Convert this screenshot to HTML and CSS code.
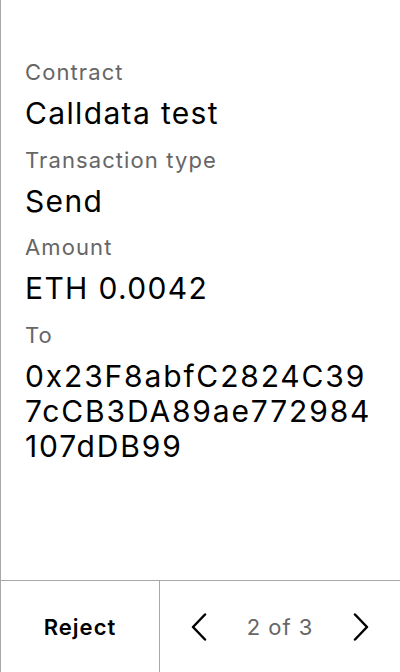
FILE: index.html
```html
<!DOCTYPE html>
<html>
<head>
<meta charset="utf-8">
<link rel="stylesheet" href="styles.css">
</head>
<body>
<div class="screen">
  <main class="details">
    <div class="label">Contract</div>
    <div class="value">Calldata test</div>
    <div class="label">Transaction type</div>
    <div class="value">Send</div>
    <div class="label">Amount</div>
    <div class="value">ETH 0.0042</div>
    <div class="label">To</div>
    <div class="value address">0x23F8abfC2824C397cCB3DA89ae772984107dDB99</div>
  </main>
  <footer class="actions">
    <button class="reject">Reject</button>
    <div class="pager">
      <button class="chev" aria-label="Previous">
        <svg width="24" height="28" viewBox="0 0 24 28"><path d="M18 1.5 L6 14 L18 26.5" fill="none" stroke="#000" stroke-width="2.5" stroke-linecap="round" stroke-linejoin="round"/></svg>
      </button>
      <span class="count">2 of 3</span>
      <button class="chev" aria-label="Next">
        <svg width="24" height="28" viewBox="0 0 24 28"><path d="M6 1.5 L18 14 L6 26.5" fill="none" stroke="#000" stroke-width="2.5" stroke-linecap="round" stroke-linejoin="round"/></svg>
      </button>
    </div>
  </footer>
</div>
</body>
</html>
```

FILE: styles.css
```css
* { box-sizing: border-box; }
html, body { margin: 0; padding: 0; background: #fff; }
body {
  font-family: Inter, "Noto Sans", sans-serif;
  color: #000;
}
.screen {
  width: 400px;
  height: 672px;
  border-left: 1px solid #a8a8a8;
  display: flex;
  flex-direction: column;
}
.details {
  flex: 1;
  padding: 58px 24px 0 24px;
  display: flex;
  flex-direction: column;
}
.label {
  font-size: 22px;
  line-height: 28px;
  letter-spacing: 1.1px;
  color: #666;
  margin-bottom: 10px;
}
.value {
  font-size: 30px;
  line-height: 35px;
  letter-spacing: 1.35px;
  color: #000;
  margin-bottom: 14.5px;
}
.address {
  letter-spacing: 1.85px;
  word-break: break-all;
}
.actions {
  height: 92px;
  border-top: 1px solid #a8a8a8;
  display: flex;
}
button {
  background: none;
  border: 0;
  padding: 0;
  margin: 0;
  font: inherit;
  color: inherit;
}
.reject {
  width: 159px;
  border-right: 1px solid #a8a8a8;
  font-size: 22px;
  font-weight: 600;
  letter-spacing: 1px;
  display: flex;
  align-items: center;
  justify-content: center;
}
.pager {
  flex: 1;
  display: flex;
  align-items: center;
  justify-content: space-between;
  padding: 0 27px;
}
.chev { display: flex; }
.count {
  font-size: 22px;
  letter-spacing: 1px;
  color: #666;
}
```
